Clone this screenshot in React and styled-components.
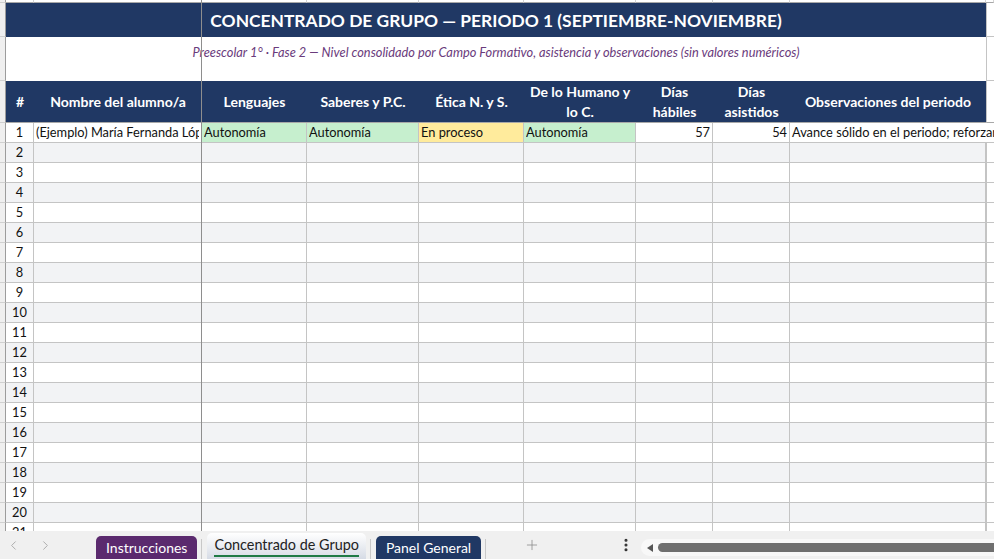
import React from "react";
import styled, { createGlobalStyle } from "styled-components";
import { ChevronLeft, ChevronRight, Plus, EllipsisVertical } from "lucide-react";

const GlobalStyle = createGlobalStyle`
  html, body { margin: 0; padding: 0; background: #ffffff; }
  body { font-family: "Lato", "Open Sans", sans-serif; overflow: hidden; }
`;

const navy = "#203864";
const grid = "#c4c4c4";

const columns = [
  { key: "num", title: "#", width: 28 },
  { key: "name", title: "Nombre del alumno/a", width: 168 },
  { key: "len", title: "Lenguajes", width: 105 },
  { key: "sab", title: "Saberes y P.C.", width: 112 },
  { key: "eti", title: "Ética N. y S.", width: 105 },
  { key: "hum", title: "De lo Humano y lo C.", width: 112 },
  { key: "hab", title: "Días hábiles", width: 77 },
  { key: "asi", title: "Días asistidos", width: 77 },
  { key: "obs", title: "Observaciones del periodo", width: 196 },
];

const template = `6px ${columns.map((c) => c.width + "px").join(" ")} 1fr`;

const example = {
  name: "(Ejemplo) María Fernanda López Hernández",
  len: { text: "Autonomía", fill: "green" },
  sab: { text: "Autonomía", fill: "green" },
  eti: { text: "En proceso", fill: "yellow" },
  hum: { text: "Autonomía", fill: "green" },
  hab: 57,
  asi: 54,
  obs: "Avance sólido en el periodo; reforzar lectura en voz alta y convivencia.",
};

const fills = { green: "#c6efce", yellow: "#ffeb9c" };

const App = () => {
  const emptyRows = Array.from({ length: 22 }, (_, i) => i + 2);

  return (
    <Page>
      <GlobalStyle />
      <Sheet>
        <Grid>
          {/* partial row above the title */}
          <Stub $h={3} />
          {columns.map((c) => (
            <TopCell key={c.key} />
          ))}
          <TopCell />

          <Stub $h={34} />
          <TitleCell>CONCENTRADO DE GRUPO — PERIODO 1 (SEPTIEMBRE-NOVIEMBRE)</TitleCell>
          <SpareCell $h={34} />

          <Stub $h={44} />
          <SubtitleCell>
            Preescolar 1° · Fase 2 — Nivel consolidado por Campo Formativo, asistencia y observaciones (sin valores numéricos)
          </SubtitleCell>
          <SpareCell $h={44} />

          <Stub $h={42} />
          {columns.map((c) => (
            <HeaderCell key={c.key}>
              <span>{c.title}</span>
            </HeaderCell>
          ))}
          <SpareCell $h={42} $strong />

          <Stub $h={20} />
          <NumCell>1</NumCell>
          <Cell>
            <Clip>{example.name}</Clip>
          </Cell>
          {["len", "sab", "eti", "hum"].map((k) => (
            <Cell key={k} $fill={fills[example[k].fill]}>
              <Clip>{example[k].text}</Clip>
            </Cell>
          ))}
          <Cell $right>{example.hab}</Cell>
          <Cell $right>{example.asi}</Cell>
          <Cell $overflow>
            <Overflow>{example.obs}</Overflow>
          </Cell>
          <SpareCell $h={20} $noLeft />

          {emptyRows.map((n) => (
            <React.Fragment key={n}>
              <Stub $h={20} />
              <NumCell $alt={n % 2 === 0}>{n}</NumCell>
              {columns.slice(1).map((c) => (
                <Cell key={c.key} $alt={n % 2 === 0} />
              ))}
              <SpareCell $h={20} />
            </React.Fragment>
          ))}
        </Grid>
        <FreezeLine />
      </Sheet>

      <TabBar>
        <Nav>
          <ChevronLeft size={15} strokeWidth={1.5} />
          <ChevronRight size={15} strokeWidth={1.5} />
        </Nav>
        <Tabs>
          <Tab $bg="#5b2a6e">Instrucciones</Tab>
          <TabSep />
          <ActiveTab>Concentrado de Grupo</ActiveTab>
          <TabSep />
          <Tab $bg={navy}>Panel General</Tab>
          <TabSep />
        </Tabs>
        <AddButton>
          <Plus size={16} strokeWidth={1.2} />
        </AddButton>
        <MoreButton>
          <EllipsisVertical size={16} strokeWidth={2.6} />
        </MoreButton>
        <ScrollTrack>
          <ScrollArrow />
          <ScrollThumb />
        </ScrollTrack>
      </TabBar>
    </Page>
  );
};

const Page = styled.div`
  width: 994px;
  height: 559px;
  display: flex;
  flex-direction: column;
  overflow: hidden;
`;

const Sheet = styled.div`
  position: relative;
  height: 531px;
  overflow: hidden;
  background: #ffffff;
`;

const Grid = styled.div`
  display: grid;
  grid-template-columns: ${template};
  grid-auto-rows: auto;
  font-size: 12.8px;
  color: #111;
`;

const Stub = styled.div`
  box-sizing: border-box;
  height: ${(p) => p.$h}px;
  background: #efefef;
  border-right: 1px solid #9c9c9c;
  border-bottom: 1px solid #d0d0d0;
`;

const TopCell = styled.div`
  box-sizing: border-box;
  height: 3px;
  border-right: 1px solid #d4d4d4;
  border-bottom: 1px solid #a8a8a8;
`;

const TitleCell = styled.div`
  grid-column: 2 / span 9;
  box-sizing: border-box;
  height: 34px;
  background: ${navy};
  color: #ffffff;
  font-weight: 700;
  font-size: 17.4px;
  display: flex;
  align-items: center;
  justify-content: center;
`;

const SubtitleCell = styled.div`
  grid-column: 2 / span 9;
  box-sizing: border-box;
  height: 44px;
  padding-top: 7px;
  text-align: center;
  color: #6a3b7c;
  font-style: italic;
  font-size: 12.8px;
`;

const SpareCell = styled.div`
  box-sizing: border-box;
  height: ${(p) => p.$h}px;
  border-left: ${(p) => (p.$noLeft ? "none" : `1px solid ${grid}`)};
  border-bottom: 1px solid ${(p) => (p.$strong ? "#a8a8a8" : grid)};
`;

const HeaderCell = styled.div`
  box-sizing: border-box;
  height: 42px;
  background: ${navy};
  color: #ffffff;
  font-weight: 700;
  font-size: 14px;
  line-height: 20px;
  display: flex;
  align-items: center;
  justify-content: center;
  text-align: center;
  padding: 0 4px;
  border-bottom: 1px solid #a8a8a8;

  span {
    display: block;
  }
`;

const Cell = styled.div`
  box-sizing: border-box;
  height: 20px;
  line-height: 19px;
  padding: 0 2px;
  white-space: nowrap;
  text-align: ${(p) => (p.$right ? "right" : "left")};
  background: ${(p) => p.$fill || (p.$alt ? "#f2f3f5" : "#ffffff")};
  border-right: ${(p) => (p.$overflow ? "none" : `1px solid ${grid}`)};
  border-bottom: 1px solid ${grid};
  overflow: ${(p) => (p.$overflow ? "visible" : "hidden")};
  position: relative;
`;

const NumCell = styled(Cell)`
  text-align: center;
  padding: 0;
`;

const Clip = styled.span`
  display: block;
  overflow: hidden;
`;

const Overflow = styled.span`
  position: relative;
  z-index: 1;
`;

const FreezeLine = styled.div`
  position: absolute;
  left: 201px;
  top: 0;
  bottom: 0;
  width: 1px;
  background: #8e8e8e;
  z-index: 2;
`;

const TabBar = styled.div`
  height: 28px;
  background: #f0f0f0;
  display: flex;
  align-items: flex-end;
  position: relative;
  font-size: 14px;
`;

const Nav = styled.div`
  width: 96px;
  height: 100%;
  display: flex;
  align-items: center;
  gap: 17px;
  padding-left: 6px;
  box-sizing: border-box;
  color: #a8a8a8;
`;

const Tabs = styled.div`
  display: flex;
  align-items: flex-end;
  height: 100%;
`;

const Tab = styled.div`
  height: 23px;
  box-sizing: border-box;
  padding: 0 10px;
  border-radius: 5px 5px 0 0;
  background: ${(p) => p.$bg};
  color: #ffffff;
  display: flex;
  align-items: center;
  padding-bottom: 1px;
`;

const ActiveTab = styled.div`
  height: 26px;
  box-sizing: border-box;
  padding: 0 7px 4px;
  border-radius: 5px 5px 0 0;
  background: linear-gradient(#ffffff, #d6dbe5);
  color: #222;
  font-size: 14.4px;
  display: flex;
  align-items: center;
  position: relative;

  &::after {
    content: "";
    position: absolute;
    left: 7px;
    right: 7px;
    bottom: 2px;
    height: 2px;
    background: #1f7a45;
  }
`;

const TabSep = styled.div`
  width: 1px;
  height: 20px;
  margin: 0 5px 0 4px;
  background: #c8c8c8;
  align-self: flex-end;
`;

const AddButton = styled.div`
  height: 100%;
  display: flex;
  align-items: center;
  margin-left: 33px;
  color: #8a8a8a;
`;

const MoreButton = styled.div`
  height: 100%;
  display: flex;
  align-items: center;
  margin-left: 78px;
  color: #333;
`;

const ScrollTrack = styled.div`
  position: absolute;
  left: 641px;
  right: 0;
  top: 8px;
  height: 17px;
  border-radius: 9px 0 0 9px;
  background: #f8f8f8;
  display: flex;
  align-items: center;
`;

const ScrollArrow = styled.div`
  width: 0;
  height: 0;
  margin-left: 6px;
  border-top: 4px solid transparent;
  border-bottom: 4px solid transparent;
  border-right: 6px solid #555;
`;

const ScrollThumb = styled.div`
  flex: 1;
  margin-left: 5px;
  height: 9px;
  border-radius: 5px 0 0 5px;
  background: #6f6f6f;
`;

export default App;
